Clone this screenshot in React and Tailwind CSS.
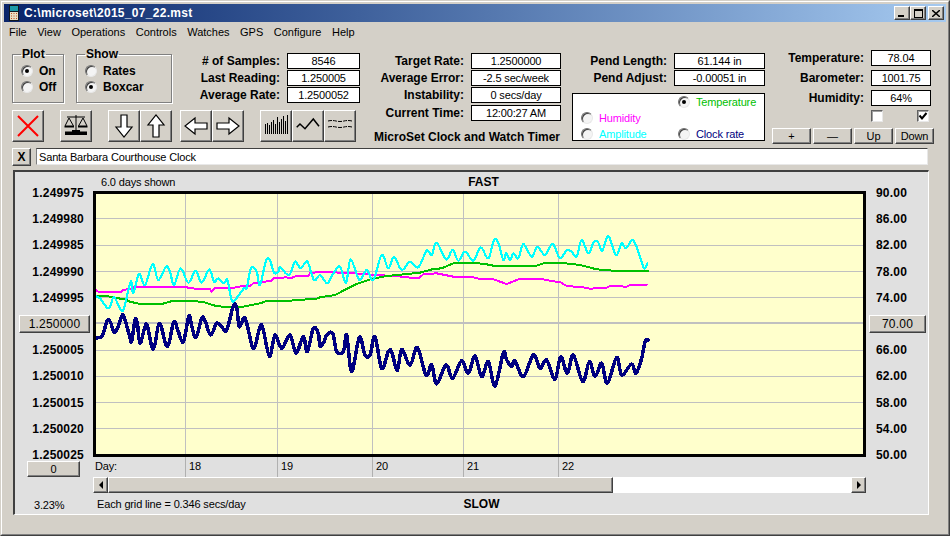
import React from "react";

const bevel =
  "bg-[#d4d0c8] border border-t-white border-l-white border-r-[#404040] border-b-[#404040] shadow-[inset_-1px_-1px_0_#808080]";
const sunkenBox =
  "bg-white border border-t-[#606060] border-l-[#606060] border-r-[#e8e8e8] border-b-[#e8e8e8] shadow-[inset_1px_1px_0_#a0a0a0]";

// Trace points read from the plot in 3x, left part starts at 90,220 and right part at 320,220
const toPoints = (left, right) => [
  ...left.map(([x, y]) => [x / 3 + 90, y / 3 + 220]),
  ...right.map(([x, y]) => [x / 3 + 320, y / 3 + 220]),
];

const polyPoints = (pts) => pts.map((p) => p.join(",")).join(" ");

// Rounds off the crests of the two noisy traces
const smoothPath = (pts) => {
  let d = `M${pts[0][0]} ${pts[0][1]}`;
  for (let i = 0; i < pts.length - 1; i++) {
    const p0 = pts[Math.max(i - 1, 0)];
    const p1 = pts[i];
    const p2 = pts[i + 1];
    const p3 = pts[Math.min(i + 2, pts.length - 1)];
    const c1 = [p1[0] + (p2[0] - p0[0]) / 6, p1[1] + (p2[1] - p0[1]) / 6];
    const c2 = [p2[0] - (p3[0] - p1[0]) / 6, p2[1] - (p3[1] - p1[1]) / 6];
    d += `C${c1[0]} ${c1[1]} ${c2[0]} ${c2[1]} ${p2[0]} ${p2[1]}`;
  }
  return d;
};

const clockRate = toPoints(
  [[14,355],[30,352],[38,345],[52,302],[62,308],[72,337],[82,325],[97,285],[105,300],[118,345],[125,365],[135,300],[142,310],[150,370],[165,320],[172,318],[190,388],[208,310],[228,375],[238,365],[252,305],[265,335],[280,365],[297,288],[305,318],[318,352],[335,295],[345,302],[362,345],[380,310],[395,320],[410,330],[430,258],[440,262],[448,320],[465,295],[487,380],[497,372],[515,315],[538,408],[555,345],[575,385],[600,345],[618,400],[640,350],[652,395],[670,325],[685,340]],
  [[0,378],[12,365],[20,345],[38,340],[50,395],[70,395],[80,345],[95,455],[118,352],[135,405],[150,405],[165,350],[185,445],[205,395],[215,395],[232,452],[245,388],[270,435],[292,382],[318,465],[335,435],[350,492],[378,435],[398,475],[425,422],[445,460],[465,408],[485,470],[505,425],[525,498],[550,398],[560,420],[575,440],[585,422],[610,470],[640,405],[660,445],[680,420],[705,478],[722,410],[742,460],[760,405],[788,485],[808,425],[825,470],[845,430],[862,490],[890,412],[905,465],[935,432],[948,460],[965,415],[975,365],[985,360]]
);

const amplitude = toPoints(
  [[14,228],[30,235],[50,262],[60,260],[72,232],[92,268],[102,265],[122,185],[130,218],[147,162],[165,195],[188,132],[205,180],[228,140],[240,155],[252,195],[272,145],[295,188],[317,152],[335,188],[358,148],[372,185],[385,175],[402,190],[412,180],[425,240],[435,240],[462,205],[470,205],[483,145],[500,155],[510,195],[528,122],[540,122],[552,158],[565,155],[570,142],[597,165],[615,125],[632,145],[652,125],[672,180]],
  [[0,165],[22,190],[40,160],[60,140],[78,188],[92,118],[118,180],[140,150],[160,180],[185,105],[205,145],[222,110],[245,150],[270,125],[295,142],[320,92],[335,105],[350,68],[378,118],[398,90],[415,122],[435,95],[460,122],[482,82],[505,115],[522,60],[535,70],[550,120],[558,100],[570,120],[580,100],[595,115],[610,72],[635,110],[652,80],[675,105],[698,72],[720,115],[740,90],[755,95],[770,110],[785,60],[805,100],[822,65],[835,68],[847,92],[865,48],[888,105],[905,70],[918,85],[938,60],[955,95],[972,145],[982,130]]
);

const humidity = toPoints(
  [[14,207],[25,215],[95,215],[100,210],[125,205],[135,200],[290,200],[295,205],[360,207],[365,215],[375,205],[430,205],[440,200],[480,198],[490,190],[545,182],[550,175],[590,172],[600,175],[620,168],[655,168],[660,160]],
  [[0,155],[100,160],[140,162],[160,165],[230,168],[260,172],[295,175],[310,163],[350,160],[400,170],[460,172],[480,177],[520,178],[560,192],[600,176],[660,176],[700,184],[720,186],[740,198],[790,202],[810,206],[860,203],[870,198],[920,200],[930,195],[960,196],[980,194]]
);

const temperature = toPoints(
  [[14,228],[50,228],[85,235],[105,238],[120,245],[150,252],[215,252],[250,242],[300,242],[340,246],[370,256],[410,262],[460,260],[510,250],[530,243],[600,242],[680,236]],
  [[0,232],[45,225],[70,212],[110,192],[155,177],[200,168],[260,162],[300,158],[340,147],[365,145],[400,130],[430,128],[490,131],[520,137],[590,138],[650,137],[670,130],[720,128],[780,135],[830,148],[880,152],[985,152]]
);

const Radio = ({ checked }) => (
  <span className="flex items-center justify-center w-3 h-3 shrink-0 rounded-full bg-[#f4f4f4] border border-t-[#707070] border-l-[#707070] border-r-[#e8e8e8] border-b-[#e8e8e8] shadow-[inset_1px_1px_0_#404040]">
    {checked && <span className="w-1 h-1 rounded-full bg-black" />}
  </span>
);

const Option = ({ label, checked, className = "" }) => (
  <div className={`flex items-center gap-[6px] h-4 ${className}`}>
    <Radio checked={checked} />
    <span>{label}</span>
  </div>
);

const Group = ({ title, width, children }) => (
  <fieldset className={`h-14 shrink-0 pl-2 pt-[2px] border border-[#808080] shadow-[1px_1px_0_#fff,inset_1px_1px_0_#fff] ${width}`}>
    <legend className="px-[1px] text-[12px] tracking-normal leading-[14px] font-bold">{title}</legend>
    <div className="text-[12px] tracking-normal font-bold">{children}</div>
  </fieldset>
);

const Readout = ({ label, value, labelWidth, boxWidth, className = "" }) => (
  <div className={`flex items-center h-4 ${className}`}>
    <span className={`text-right text-[12px] tracking-normal font-bold whitespace-nowrap ${labelWidth}`}>{label}</span>
    <span className={`flex items-center justify-center h-4 ml-[7px] bg-white border border-black ${boxWidth}`}>{value}</span>
  </div>
);

const IconButton = ({ children }) => (
  <button className={`flex items-center justify-center w-8 h-8 ${bevel}`}>{children}</button>
);

const BlockArrow = ({ points }) => (
  <svg viewBox="0 0 24 24" className="w-6 h-6">
    <polygon points={points} fill="#fff" stroke="#000" strokeWidth="1.2" />
  </svg>
);

const Scale = () => (
  <svg viewBox="0 0 24 24" className="w-6 h-6">
    <g fill="none" stroke="#000" strokeWidth="1">
      <path d="M12 1V18M3 3H21" />
      <path d="M5 4L1 12H9.5ZM19 4L14.5 12H23Z" />
    </g>
    <path d="M0.5 12H10V13.5H0.5ZM14 12H23.5V13.5H14Z" fill="#000" />
    <path d="M8 16H16V17.5H23V21H1V17.5H8Z" fill="#000" />
  </svg>
);

const Triangle = ({ flip }) => (
  <svg viewBox="0 0 6 8" className={`w-[6px] h-2 ${flip ? "rotate-180" : ""}`}>
    <polygon points="5,0 1,4 5,8" fill="#000" />
  </svg>
);

const barTops = [10, 9, 11, 8, 6, 10, 3, 8, 5, 2, 7, 1];
const leftAxis = ["1.249975", "1.249980", "1.249985", "1.249990", "1.249995", "1.250000", "1.250005", "1.250010", "1.250015", "1.250020", "1.250025"];
const rightAxis = ["90.00", "86.00", "82.00", "78.00", "74.00", "70.00", "66.00", "62.00", "58.00", "54.00", "50.00"];
const gridY = [218, 245, 271, 297, 350, 376, 402, 428];
const gridX = [185, 277, 372, 463, 558];
const days = [
  { day: "18", width: "w-[92px]" },
  { day: "19", width: "w-[95px]" },
  { day: "20", width: "w-[91px]" },
  { day: "21", width: "w-[95px]" },
  { day: "22", width: "w-[92px]" },
];

export default function App() {
  return (
    <div className="w-[950px] h-[536px] overflow-hidden border border-t-[#d4d0c8] border-l-[#d4d0c8] border-r-[#404040] border-b-[#404040] bg-[#d4d0c8] text-black text-[11px] tracking-[-0.15px] leading-[14px] font-['Liberation_Sans',Arial,sans-serif]">
      <div className="w-full h-full p-[2px] border border-t-white border-l-white border-r-[#808080] border-b-[#808080]">
        {/* Title bar */}
        <div className="flex items-center h-[18px] pl-1 pr-[2px] bg-gradient-to-r from-[#0a246a] to-[#a6caf0]">
          <svg viewBox="0 0 12 16" className="w-3 h-4">
            <rect x="1" y="0" width="10" height="16" fill="#101820" />
            <rect x="2" y="1" width="8" height="5" fill="#1c9aa8" />
            <rect x="2" y="7" width="8" height="8" fill="#e6e0c4" />
            <path d="M3 8h1v1H3zM5.5 8h1v1h-1zM8 8h1v1H8zM3 10.500h1v1H3zM5.500 10.500h1v1h-1zM8 10.500h1v1H8zM3 13h1v1H3zM5.500 13h1v1h-1zM8 13h1v1H8z" fill="#c05020" />
          </svg>
          <span className="ml-1 text-[12px] font-bold text-white tracking-[0.3px]">C:\microset\2015_07_22.mst</span>
          <div className="flex ml-auto">
            <button className={`flex items-end justify-start w-4 h-[14px] pl-[3px] pb-[2px] ${bevel}`}>
              <span className="w-[6px] h-[2px] bg-black" />
            </button>
            <button className={`flex items-center justify-center w-4 h-[14px] ${bevel}`}>
              <span className="w-[9px] h-[9px] border border-t-2 border-black" />
            </button>
            <button className={`flex items-center justify-center w-4 h-[14px] ml-[2px] ${bevel}`}>
              <svg viewBox="0 0 8 7" className="w-2 h-[7px]">
                <path d="M0 0L8 7M8 0L0 7" stroke="#000" strokeWidth="1.5" />
              </svg>
            </button>
          </div>
        </div>

        {/* Menu */}
        <div className="flex items-center gap-[10.5px] h-5 pl-[5px] tracking-normal">
          {["File", "View", "Operations", "Controls", "Watches", "GPS", "Configure", "Help"].map((item) => (
            <span key={item}>{item}</span>
          ))}
        </div>

        {/* Controls */}
        <div className="flex h-[106px] pl-2">
          <div className="w-[348px] shrink-0 pt-[5px]">
            <div className="flex">
              <Group title="Plot" width="w-[52px]">
                <Option label="On" checked />
                <Option label="Off" />
              </Group>
              <div className="w-3 shrink-0" />
              <Group title="Show" width="w-[96px]">
                <Option label="Rates" />
                <Option label="Boxcar" checked />
              </Group>
              <div className="flex flex-col gap-[1px] ml-5 pt-[6px]">
                <Readout label="# of Samples:" value="8546" labelWidth="w-[88px]" boxWidth="w-[73px]" />
                <Readout label="Last Reading:" value="1.250005" labelWidth="w-[88px]" boxWidth="w-[73px]" />
                <Readout label="Average Rate:" value="1.2500052" labelWidth="w-[88px]" boxWidth="w-[73px]" />
              </div>
            </div>
            <div className="flex mt-[7px]">
              <IconButton>
                <svg viewBox="0 0 24 24" className="w-6 h-6">
                  <path d="M2 2L22 22M22 2L2 22" stroke="#ff0000" strokeWidth="2" />
                </svg>
              </IconButton>
              <div className="w-4" />
              <IconButton><Scale /></IconButton>
              <div className="w-4" />
              <IconButton><BlockArrow points="9,1 15,1 15,13 20,13 12,23 4,13 9,13" /></IconButton>
              <IconButton><BlockArrow points="9,23 15,23 15,11 20,11 12,1 4,11 9,11" /></IconButton>
              <div className="w-2" />
              <IconButton><BlockArrow points="23,9 23,15 11,15 11,20 1,12 11,4 11,9" /></IconButton>
              <IconButton><BlockArrow points="1,9 1,15 13,15 13,20 23,12 13,4 13,9" /></IconButton>
              <div className="w-4" />
              <IconButton>
                <svg viewBox="0 0 24 24" className="w-6 h-6" shapeRendering="crispEdges">
                  {barTops.map((top, i) => (
                    <rect key={i} x={1 + i * 2} y={top} width="1" height={20 - top} fill="#000" />
                  ))}
                </svg>
              </IconButton>
              <IconButton>
                <svg viewBox="0 0 24 24" className="w-6 h-6">
                  <polyline points="0.700,13.300 4,10 9,14.700 17.300,5 23,12.300" fill="none" stroke="#000" strokeWidth="1.5" />
                </svg>
              </IconButton>
              <IconButton>
                <svg viewBox="0 0 26 24" className="w-[26px] h-6">
                  <g fill="none" stroke="#000" strokeWidth="1" strokeDasharray="4 1">
                    <path d="M1 7Q5 6 9 7T17 7T25 7" />
                    <path d="M1 13Q5 12 9 13T17 13T25 13" />
                  </g>
                </svg>
              </IconButton>
            </div>
          </div>

          <div className="w-[195px] shrink-0 ml-[6px] pt-[11px]">
            <Readout label="Target Rate:" value="1.2500000" labelWidth="w-[98px]" boxWidth="w-[90px]" />
            <Readout label="Average Error:" value="-2.5 sec/week" labelWidth="w-[98px]" boxWidth="w-[90px]" className="mt-[1px]" />
            <Readout label="Instability:" value="0 secs/day" labelWidth="w-[98px]" boxWidth="w-[90px]" className="mt-[1px]" />
            <Readout label="Current Time:" value="12:00:27 AM" labelWidth="w-[98px]" boxWidth="w-[90px]" className="mt-[2px]" />
            <div className="mt-[9px] pl-2 text-[12px] tracking-normal font-bold whitespace-nowrap">MicroSet Clock and Watch Timer</div>
          </div>

          <div className="w-[193px] shrink-0 ml-[11px] pt-[11px]">
            <Readout label="Pend Length:" value="61.144 in" labelWidth="w-[95px]" boxWidth="w-[91px]" />
            <Readout label="Pend Adjust:" value="-0.00051 in" labelWidth="w-[95px]" boxWidth="w-[91px]" className="mt-[1px]" />
            <div className="grid grid-cols-[97px_1fr] h-12 mt-[7px] pl-2 bg-white border border-black">
              <div />
              <Option label="Temperature" checked className="text-[#00c000]" />
              <Option label="Humidity" className="text-[#ff00ff]" />
              <div />
              <Option label="Amplitude" className="text-[#00ffff]" />
              <Option label="Clock rate" className="text-[#000080]" />
            </div>
          </div>

          <div className="w-[162px] shrink-0 ml-[7px] pt-2">
            <Readout label="Temperature:" value="78.04" labelWidth="w-[92px]" boxWidth="w-[60px]" />
            <Readout label="Barometer:" value="1001.75" labelWidth="w-[92px]" boxWidth="w-[60px]" className="mt-1" />
            <Readout label="Humidity:" value="64%" labelWidth="w-[92px]" boxWidth="w-[60px]" className="mt-1" />
            <div className="flex justify-between w-[58px] mt-1 ml-[99px]">
              <span className={`w-3 h-3 ${sunkenBox}`} />
              <span className={`flex items-center justify-center w-3 h-3 ${sunkenBox}`}>
                <svg viewBox="0 0 10 10" className="w-[10px] h-[10px]">
                  <path d="M1.500 4.500L4 7.500L8.500 2" fill="none" stroke="#000" strokeWidth="2" />
                </svg>
              </span>
            </div>
            <div className="flex gap-[2px] mt-[6px]">
              {["+", "—", "Up", "Down"].map((label) => (
                <button key={label} className={`flex items-center justify-center w-[39px] h-4 ${bevel}`}>{label}</button>
              ))}
            </div>
          </div>
        </div>

        {/* Name row */}
        <div className="flex h-[18px] pl-2">
          <button className={`flex items-center justify-center w-[19px] h-[18px] text-[12px] font-bold ${bevel}`}>X</button>
          <div className="flex items-center w-[892px] h-[17px] ml-[5px] pl-[2px] bg-white border border-t-[#404040] border-l-[#808080] border-r-[#e8e8e8] border-b-[#e8e8e8]">
            Santa Barbara Courthouse Clock
          </div>
        </div>

        {/* Chart panel */}
        <div className="flex w-[916px] h-[345px] ml-[9px] mt-1 bg-[#e0e0e0] border-t-2 border-l-2 border-t-[#404040] border-l-[#404040] border-r border-b border-r-white border-b-white">
          <div className="flex flex-col w-[78px] shrink-0 pt-[14px]">
            <div className="flex flex-col gap-[12.2px]">
              {leftAxis.map((value) =>
                value === "1.250000" ? (
                  <button key={value} className={`-my-[2px] ml-1 mr-[3px] h-[18px] text-[12px] tracking-[0.2px] ${bevel}`}>{value}</button>
                ) : (
                  <span key={value} className="pr-[9px] text-right text-[12px] tracking-[0.2px] font-bold">{value}</span>
                )
              )}
            </div>
            <button className={`w-[53px] h-4 -mt-[1px] ml-3 ${bevel}`}>0</button>
            <span className="mt-[21px] ml-[19px]">3.23%</span>
          </div>

          <div className="flex flex-col w-[773px] shrink-0">
            <div className="grid grid-cols-[1fr_auto_1fr] items-center h-[19px] pl-2">
              <span>6.0 days shown</span>
              <span className="text-[12px] tracking-normal font-bold">FAST</span>
            </div>
            <div className="h-[266px] border-[3px] border-black bg-[#ffffcc]">
              <svg viewBox="96 194 767 260" className="block w-full h-full">
                <g stroke="#c0c0c0" strokeWidth="1" shapeRendering="crispEdges">
                  {gridY.map((y) => <line key={y} x1="96" x2="863" y1={y} y2={y} />)}
                  {gridX.map((x) => <line key={x} x1={x} x2={x} y1="194" y2="454" />)}
                  <line x1="96" x2="863" y1="323" y2="323" strokeWidth="2" />
                </g>
                <g fill="none" shapeRendering="crispEdges" strokeLinejoin="round" strokeLinecap="round">
                  <polyline points={polyPoints(humidity)} stroke="#ff00ff" strokeWidth="2" />
                  <polyline points={polyPoints(temperature)} stroke="#00c000" strokeWidth="2" />
                  <path d={smoothPath(amplitude)} stroke="#00ffff" strokeWidth="2.2" />
                  <path d={smoothPath(clockRate)} stroke="#000080" strokeWidth="3.5" />
                </g>
              </svg>
            </div>
            <div className="flex h-5">
              <span className="w-[92px] pl-[2px] pt-[2px]">Day:</span>
              {days.map(({ day, width }) => (
                <span key={day} className={`pl-[3px] pt-[2px] border-l border-l-[#b0b0b0] ${width}`}>{day}</span>
              ))}
            </div>
            <div className="flex h-4 bg-white">
              <button className={`flex items-center justify-center w-[15px] ${bevel}`}><Triangle /></button>
              <div className={`w-[505px] ${bevel}`} />
              <div className="flex-1" />
              <button className={`flex items-center justify-center w-[15px] ${bevel}`}><Triangle flip /></button>
            </div>
            <div className="grid grid-cols-[1fr_auto_1fr] items-center h-[20px] pl-1 pt-[2px]">
              <span className="whitespace-nowrap">Each grid line = 0.346 secs/day</span>
              <span className="text-[12px] tracking-normal font-bold">SLOW</span>
            </div>
          </div>

          <div className="flex flex-col w-[62px] shrink-0 pt-[14px] gap-[12.2px]">
            {rightAxis.map((value) =>
              value === "70.00" ? (
                <button key={value} className={`-my-[2px] w-[57px] ml-[3px] h-[18px] text-[12px] tracking-[0.2px] ${bevel}`}>{value}</button>
              ) : (
                <span key={value} className="pl-[10px] text-[12px] tracking-[0.2px] font-bold">{value}</span>
              )
            )}
          </div>
        </div>
      </div>
    </div>
  );
}
